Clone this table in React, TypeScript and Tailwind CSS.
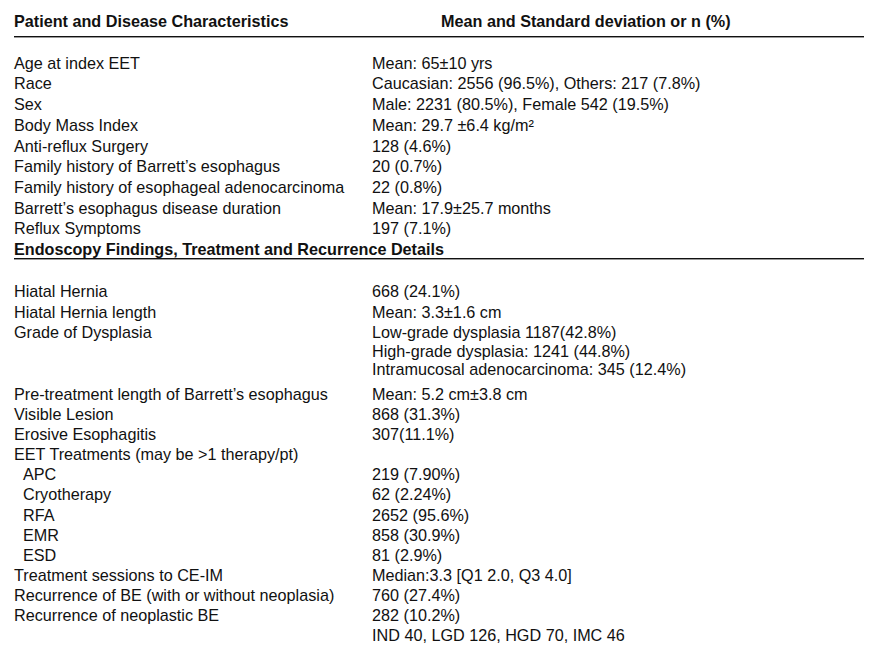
type Row = {
  label: string
  value?: string | string[]
  indent?: boolean
}

const patientRows: Row[] = [
  { label: 'Age at index EET', value: 'Mean: 65±10 yrs' },
  { label: 'Race', value: 'Caucasian: 2556 (96.5%), Others: 217 (7.8%)' },
  { label: 'Sex', value: 'Male: 2231 (80.5%), Female 542 (19.5%)' },
  { label: 'Body Mass Index', value: 'Mean: 29.7 ±6.4 kg/m²' },
  { label: 'Anti-reflux Surgery', value: '128 (4.6%)' },
  { label: 'Family history of Barrett’s esophagus', value: '20 (0.7%)' },
  { label: 'Family history of esophageal adenocarcinoma', value: '22 (0.8%)' },
  { label: 'Barrett’s esophagus disease duration', value: 'Mean: 17.9±25.7 months' },
  { label: 'Reflux Symptoms', value: '197 (7.1%)' },
]

const treatmentRows: Row[] = [
  { label: 'Pre-treatment length of Barrett’s esophagus', value: 'Mean: 5.2 cm±3.8 cm' },
  { label: 'Visible Lesion', value: '868 (31.3%)' },
  { label: 'Erosive Esophagitis', value: '307(11.1%)' },
  { label: 'EET Treatments (may be >1 therapy/pt)' },
  { label: 'APC', value: '219 (7.90%)', indent: true },
  { label: 'Cryotherapy', value: '62 (2.24%)', indent: true },
  { label: 'RFA', value: '2652 (95.6%)', indent: true },
  { label: 'EMR', value: '858 (30.9%)', indent: true },
  { label: 'ESD', value: '81 (2.9%)', indent: true },
  { label: 'Treatment sessions to CE-IM', value: 'Median:3.3 [Q1 2.0, Q3 4.0]' },
  { label: 'Recurrence of BE (with or without neoplasia)', value: '760 (27.4%)' },
  { label: 'Recurrence of neoplastic BE', value: '282 (10.2%)' },
  { label: '', value: 'IND 40, LGD 126, HGD 70, IMC 46' },
]

function TableRow({ row, leading }: { row: Row; leading: string }) {
  return (
    <div className={`grid grid-cols-[358px_1fr] ${leading}`}>
      <div className={row.indent ? 'pl-[9px]' : ''}>{row.label}</div>
      <div>{row.value}</div>
    </div>
  )
}

function Rule() {
  return (
    <div>
      <div className="h-px bg-[#111]" />
      <div className="h-px bg-[#9a9a9a]" />
    </div>
  )
}

export default function App() {
  return (
    <div
      className="w-[871px] h-[655px] bg-white text-[16.2px] text-[#111] overflow-hidden"
      style={{ fontFamily: '"Liberation Sans", Arial, sans-serif' }}
    >
      <div className="w-[850px] ml-[14px] pt-[11px]">
        {/* column headings */}
        <div className="grid grid-cols-[358px_1fr] font-bold leading-[20.7px]">
          <div>Patient and Disease Characteristics</div>
          <div className="pl-[69px]">Mean and Standard deviation or n (%)</div>
        </div>
        <div className="mt-[4px]">
          <Rule />
        </div>

        <div className="mt-[15px]">
          {patientRows.map((r) => (
            <TableRow key={r.label} row={r} leading="leading-[20.7px]" />
          ))}
          <div className="font-bold leading-[20.7px] h-[19px]">
            Endoscopy Findings, Treatment and Recurrence Details
          </div>
        </div>
        <Rule />

        <div className="mt-[21px]">
          <TableRow row={{ label: 'Hiatal Hernia', value: '668 (24.1%)' }} leading="leading-[20.7px]" />
          <TableRow row={{ label: 'Hiatal Hernia length', value: 'Mean: 3.3±1.6 cm' }} leading="leading-[20.7px]" />
          <div className="grid grid-cols-[358px_1fr]">
            <div className="leading-[20.7px]">Grade of Dysplasia</div>
            <div className="leading-[18.5px] pt-px">
              <div>Low-grade dysplasia 1187(42.8%)</div>
              <div>High-grade dysplasia: 1241 (44.8%)</div>
              <div>Intramucosal adenocarcinoma: 345 (12.4%)</div>
            </div>
          </div>
        </div>

        <div className="mt-[5px]">
          {treatmentRows.map((r, i) => (
            <TableRow key={i} row={r} leading="leading-[20.1px]" />
          ))}
        </div>
      </div>
    </div>
  )
}
